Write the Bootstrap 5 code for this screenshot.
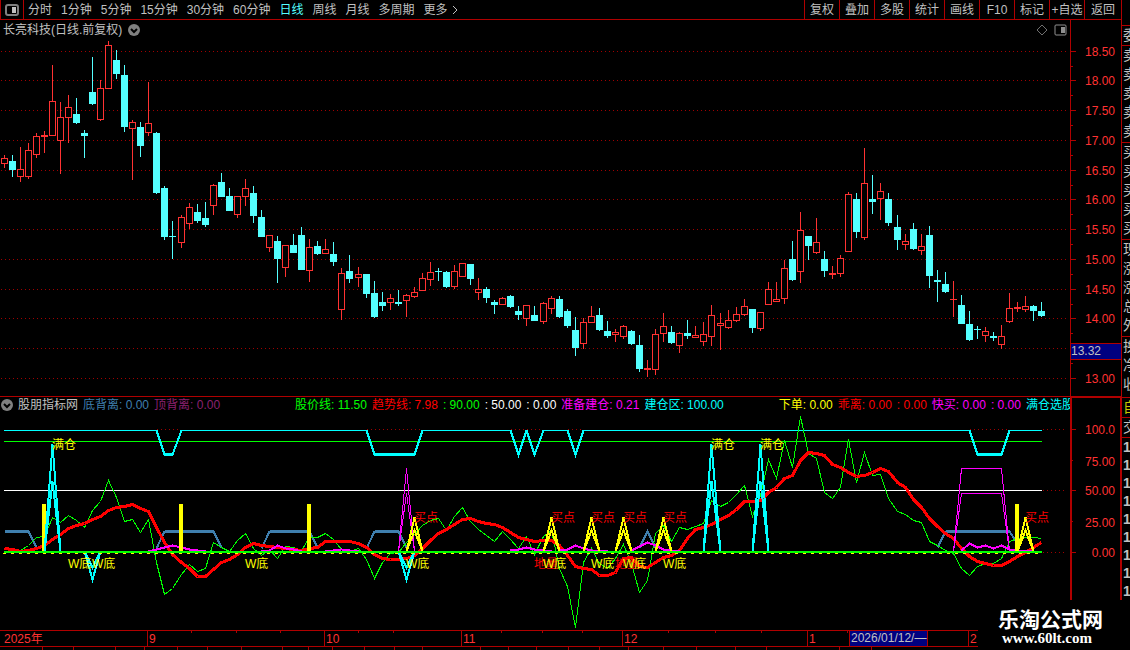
<!DOCTYPE html>
<html lang="zh-CN" data-bs-theme="dark">
<head>
<meta charset="utf-8">
<meta name="viewport" content="width=device-width, initial-scale=1">
<title>长亮科技 日线</title>
<link href="https://cdn.jsdelivr.net/npm/bootstrap@5.3.0/dist/css/bootstrap.min.css" rel="stylesheet">
<style>
  :root { --line: #b00000; --ink: #c0c0c0; --price: #ff3232; }
  body { background: #000; color: var(--ink); font: 12px/16px "Liberation Sans", "Noto Sans CJK SC", sans-serif; min-height: 100vh; }
  svg { display: block; }
  .toolbar { height: 20px; border-right: 1px solid var(--line); border-bottom: 1px solid var(--line); }
  .toolbar button { background: none; border: 0; padding: 0; color: inherit; line-height: 18px; white-space: nowrap; }
  .toolbar .layout-toggle { width: 24px; border-left: 1px solid var(--line); border-right: 1px solid var(--line); }
  .periods { gap: 9px; padding-left: 4px; }
  .periods .current { color: #54ffff; }
  .toolbar .tool { width: 35px; border-left: 1px solid var(--line); }
  .toolbar .tool:last-child { width: 37px; }
  .pane-price { flex: 376 1 0; }
  .pane-indicator { flex: 234 1 0; }
  .plot { min-width: 0; min-height: 0; }
  .pane-indicator .plot { border-top: 1px solid var(--line); }
  .plot-title { height: 20px; padding: 0 3px; gap: 6px; }
  .legend-row { height: 16px; margin-bottom: 1px; gap: 5px; padding-left: 1px; white-space: nowrap; overflow: hidden; }
  .canvas { min-height: 0; overflow: hidden; }
  .canvas svg { width: 100%; height: 100%; }
  .scale { width: 52px; flex: none; }
  .pane-price .scale { border-left: 1px solid var(--line); border-right: 1px solid var(--line); }
  .pane-indicator .scale { border: 2px solid var(--line); border-bottom: 0; }
  .dates { height: 20px; }
  .group-wide { margin-left: 70px; }
  .group-mid { margin-left: 50px; }
  .quotes { width: 8px; flex: none; overflow: hidden; font-size: 14px; }
  .quotes .block { border-bottom: 1px solid var(--line); padding-left: 1px; }
  .quotes .block-head { height: 26px; }
  .quotes .cell { height: 19px; line-height: 19px; width: 20px; }
  .quotes .block-5 { height: 97px; }
  .quotes .block-3 { height: 61px; }
  .quotes .cell-tick { height: 18px; line-height: 18px; font-weight: bold; padding-left: 1px; }
  .site-mark { width: 152px; height: 50px; background: #000; color: #fff; }
  .site-mark .site-name { font: bold 21px/20px "Noto Sans CJK SC", sans-serif; }
  .site-mark .site-url { font: bold 15px/20px "Liberation Serif", serif; }
  .c-steel { color: #3f7fae; } .c-plum { color: #8b2070; } .c-lime { color: #0f0; } .c-red { color: #f00; }
  .c-mag { color: #f0f; } .c-cyan { color: #0ff; } .c-yel { color: #ff0; }
  .c-gold { color: #c8c800; }
</style>
</head>
<body class="d-flex position-relative overflow-hidden vh-100 m-0">
<main class="d-flex flex-column flex-grow-1 plot">
  <nav class="toolbar d-flex flex-shrink-0">
    <button class="layout-toggle d-flex align-items-center justify-content-center" aria-label="布局">
      <svg width="14" height="12" viewBox="0 0 14 12"><rect x="1" y="1" width="12" height="10" rx="2" fill="none" stroke="#808080" stroke-width="2"/><rect x="7" y="3" width="4" height="6" fill="#c0c0c0"/></svg>
    </button>
    <div class="periods d-flex me-auto">
      <button>分时</button><button>1分钟</button><button>5分钟</button><button>15分钟</button><button>30分钟</button><button>60分钟</button><button class="current">日线</button><button>周线</button><button>月线</button><button>多周期</button>
      <button class="d-flex align-items-center gap-1">更多 <svg width="6" height="10" viewBox="0 0 6 10"><path d="M1 1l4 4-4 4" fill="none" stroke="#c0c0c0"/></svg></button>
    </div>
    <button class="tool">复权</button><button class="tool">叠加</button><button class="tool">多股</button><button class="tool">统计</button><button class="tool">画线</button><button class="tool">F10</button><button class="tool">标记</button><button class="tool">+自选</button><button class="tool">返回</button>
  </nav>

  <section class="pane-price d-flex plot">
    <div class="plot d-flex flex-column flex-grow-1">
      <div class="plot-title d-flex align-items-center">
        <span>长亮科技(日线.前复权)</span>
        <svg width="12" height="12" viewBox="0 0 12 12"><circle cx="6" cy="6" r="6" fill="#808080"/><path d="M3 5l3 3 3-3" fill="none" stroke="#000" stroke-width="2"/></svg>
        <svg class="ms-auto" width="12" height="12" viewBox="0 0 12 12"><path d="M6 1l5 5-5 5-5-5z" fill="none" stroke="#707070"/></svg>
        <svg width="13" height="12" viewBox="0 0 13 12"><rect x="1" y="1" width="11" height="10" rx="1" fill="none" stroke="#909090"/><rect x="7" y="3" width="4" height="6" fill="#909090"/></svg>
      </div>
      <div class="canvas flex-grow-1"><svg id="candles" role="img" aria-label="日线K线图"></svg></div>
    </div>
    <div class="scale canvas"><svg id="price-scale"></svg></div>
  </section>

  <section class="pane-indicator d-flex plot">
    <div class="plot d-flex flex-column flex-grow-1">
      <div class="legend-row d-flex align-items-center">
        <svg class="flex-shrink-0" width="12" height="12" viewBox="0 0 12 12"><circle cx="6" cy="6" r="6" fill="#808080"/><path d="M3 5l3 3 3-3" fill="none" stroke="#000" stroke-width="2"/></svg>
        <span>股朋指标网</span>
        <span class="c-steel">底背离: 0.00</span><span class="c-plum">顶背离: 0.00</span>
        <span class="c-lime group-wide">股价线: 11.50</span><span class="c-red">趋势线: 7.98</span><span class="c-lime">: 90.00</span><span class="text-white">: 50.00</span><span class="text-white">: 0.00</span><span class="c-mag">准备建仓: 0.21</span><span class="c-cyan">建仓区: 100.00</span>
        <span class="c-yel group-mid">下单: 0.00</span><span class="c-red">乖离: 0.00</span><span class="c-red">: 0.00</span><span class="c-mag">快买: 0.00</span><span class="c-mag">: 0.00</span><span class="c-cyan">满仓选股</span>
      </div>
      <div class="canvas flex-grow-1"><svg id="indicator" role="img" aria-label="股朋指标"></svg></div>
    </div>
    <div class="scale canvas"><svg id="indicator-scale"></svg></div>
  </section>

  <footer class="dates canvas flex-shrink-0"><svg id="dates"></svg></footer>
</main>

<aside class="quotes">
  <div class="block block-head"></div>
  <div class="block"><div class="cell">委</div></div>
  <div class="block block-5"><div class="cell">卖</div><div class="cell">卖</div><div class="cell">卖</div><div class="cell">卖</div><div class="cell">卖</div></div>
  <div class="block block-5"><div class="cell">买</div><div class="cell">买</div><div class="cell">买</div><div class="cell">买</div><div class="cell">买</div></div>
  <div class="block block-5"><div class="cell">现</div><div class="cell">涨</div><div class="cell">涨</div><div class="cell">总</div><div class="cell">外</div></div>
  <div class="block block-3"><div class="cell">换</div><div class="cell">净</div><div class="cell">收</div></div>
  <div class="block c-gold"><div class="cell">自</div></div>
  <div class="block"><div class="cell">交</div></div>
  <div class="cell-tick">1</div><div class="cell-tick">1</div><div class="cell-tick">1</div><div class="cell-tick">1</div><div class="cell-tick">1</div><div class="cell-tick">1</div><div class="cell-tick">1</div><div class="cell-tick">1</div><div class="cell-tick">1</div>
</aside>

<div class="site-mark position-absolute bottom-0 end-0 px-3">
  <div class="site-name px-1 pt-2 text-nowrap">乐淘公式网</div>
  <div class="site-url px-2 text-nowrap">www.60lt.com</div>
</div>

<script src="https://cdn.jsdelivr.net/npm/bootstrap@5.3.0/dist/js/bootstrap.bundle.min.js"></script>
<script>
// One candle per entry: high, body top, body bottom, low; "c" = falling day
const CANDLES = `155 158 164 168 r|155 161 170 177 c|147 169 177 182 r|143 150 177 179 r|133 136 155 158 r|131 135 137 153 r|65 101 136 136 r|102 117 141 174 r|95 107 118 143 r|98 114 123 124 c|130 133 136 158 c|57 92 104 105 c|80 88 120 121 r|41 45 89 89 r|50 60 74 79 c|65 75 127 132 c|120 122 129 180 r|122 127 146 157 c|82 123 133 136 r|132 133 193 194 c|186 188 237 240 c|221 236 237 259 c|215 217 243 248 r|203 207 224 229 r|204 212 221 223 c|202 218 225 227 c|184 185 206 215 r|173 182 197 197 c|188 196 211 211 c|196 196 215 218 r|179 188 197 206 r|186 193 216 223 c|210 217 237 237 c|235 235 248 252 r|236 241 259 283 c|245 245 268 277 r|234 245 253 253 c|227 235 270 270 c|239 247 271 282 r|241 246 254 255 c|239 249 254 254 r|242 254 262 266 c|268 273 310 320 r|255 271 279 283 c|267 274 278 287 r|274 274 294 298 c|281 293 317 318 c|292 302 306 311 c|294 298 303 310 r|290 302 304 306 c|294 295 301 317 r|287 292 297 298 r|273 278 291 291 r|262 272 280 286 r|268 271 272 281 c|271 272 287 288 c|265 271 287 289 r|263 263 277 277 r|264 264 279 285 c|278 289 293 300 r|287 289 298 303 c|300 302 305 314 c|297 298 305 305 r|295 296 307 308 c|306 311 315 320 c|305 305 319 326 r|306 315 321 321 c|302 303 322 324 r|296 298 309 314 r|296 299 317 318 c|309 311 326 328 c|317 330 348 356 c|318 322 344 349 r|306 316 323 323 r|308 315 330 331 c|321 331 336 338 c|329 332 335 342 r|325 326 337 339 r|330 331 344 345 c|335 345 369 372 c|360 368 370 377 r|329 334 370 375 r|313 326 334 342 r|326 332 343 344 c|332 333 346 353 r|320 333 336 339 c|326 335 338 338 r|322 334 342 346 r|305 315 337 346 r|313 323 326 350 r|310 320 328 329 r|307 314 321 322 r|299 306 315 316 r|309 309 328 333 c|312 312 329 331 r|282 289 305 305 r|282 299 302 302 r|260 268 299 304 r|241 259 280 281 c|212 230 272 283 r|236 236 246 260 c|218 242 253 254 r|251 259 271 277 c|266 273 275 279 r|255 258 274 277 r|192 194 252 252 r|193 199 232 238 c|148 183 238 240 r|175 199 202 214 c|183 191 199 220 r|193 199 223 226 c|215 227 240 250 c|234 241 245 250 r|223 229 249 250 c|234 246 251 255 r|226 235 276 288 c|270 280 282 302 c|272 284 292 293 c|281 299 300 317 r|295 305 324 324 c|311 324 340 341 c|326 329 330 339 c|327 331 336 342 r|332 336 338 341 c|325 336 345 349 r|293 308 322 323 r|302 307 309 312 r|296 306 310 312 r|305 306 311 321 c|302 311 316 317 c`.split('|').map(s => s.split(' '));

const PRICE_LINE = [551,551,550,545,537,536,517,522,515,520,527,510,501,480,497,521,519,532,519,562,594,588,574,564,571,568,542,547,551,540,533,548,555,549,558,546,547,550,537,537,533,539,549,551,548,559,578,562,553,552,542,534,525,520,518,530,516,507,521,529,535,541,531,539,548,536,554,536,530,568,586,627,562,548,563,568,558,544,563,592,580,533,525,541,527,529,526,523,500,506,502,494,485,516,495,459,478,440,467,416,453,458,492,498,487,439,482,452,475,474,498,511,514,520,522,541,545,550,553,568,575,566,563,563,558,541,538,537,537,538];
const TREND_LINE = [548,549,551,550,548,545,539,534,528,525,523,519,516,510,507,506,504,508,511,527,542,554,562,568,576,576,569,562,559,554,547,543,545,546,547,548,549,550,548,547,541,541,541,541,543,547,554,558,559,559,558,555,548,540,533,529,524,519,518,521,523,524,527,532,537,539,541,540,540,545,555,566,568,569,575,575,572,558,557,566,567,562,557,555,550,538,529,527,524,519,515,509,501,501,500,492,487,478,475,460,452,453,455,464,467,472,476,475,472,468,471,482,487,499,507,518,526,533,538,548,556,561,563,565,565,561,556,552,547,542];

const N = n => 4.03 + 8.0449 * n;           // bar number -> design x
let out, sx, sy, top0;
const X = x => Math.floor(x * sx), Y = y => Math.round((y - top0) * sy);
const begin = (id, w, h, t) => {
  const el = document.getElementById(id), b = el.getBoundingClientRect();
  out = []; sx = b.width / w; sy = b.height / h; top0 = t;
  return el;
};
const rect = (x, y, w, h, fill, extra = '') => out.push(`<rect x="${x}" y="${y}" width="${w}" height="${h}" fill="${fill}" ${extra}/>`);
const hline = (x1, x2, y, color, dash = '') => out.push(`<path d="M${x1} ${Y(y) + .5}H${x2}" stroke="${color}" ${dash && `stroke-dasharray="${dash}"`}/>`);
const text = (x, y, s, color, anchor = 'start') => out.push(`<text x="${x}" y="${y}" fill="${color}" font-size="12" text-anchor="${anchor}">${s}</text>`);
const poly = (pts, color, width) => out.push(`<polyline points="${pts.map(([n, y]) => `${X(N(n)) + .5},${Y(y) + .5}`).join(' ')}" fill="none" stroke="${color}" stroke-width="${width}" shape-rendering="crispEdges"/>`);

const PRICES = [51,80,110,140,170,199,229,259,289,318,348,378];

function drawCandles() {
  const el = begin('candles', 1070, 356, 40), w = X(1067);
  PRICES.forEach(y => hline(1, w, y, '#a00000', '1 3'));
  CANDLES.forEach(([h, t, b, l, kind], n) => {
    const x = X(N(n)), c = kind === 'c' ? '#54ffff' : '#ff3232', bh = Y(b) - Y(t);
    rect(x, Y(h), 1, Y(t) - Y(h), c);
    rect(x, Y(b), 1, Y(l) - Y(b), c);
    if (kind === 'c' || bh < 3) rect(x - 3, Y(t), 7, Math.max(bh, 1), c);
    else rect(x - 2.5, Y(t) + .5, 6, bh - 1, '#000', `stroke="${c}"`);
  });
  el.innerHTML = out.join('');
}

function drawPriceScale() {
  const el = begin('price-scale', 50, 376, 20);
  PRICES.forEach((y, i) => {
    hline(0, 5, y, '#b00000');
    if (i < 11) hline(0, 2, y + 15, '#b00000');
    if (i !== 10) text(44, Y(y) + 5, (18.5 - i * .5).toFixed(2), '#ff3232', 'end');
  });
  rect(0, Y(343), 50, 17, '#000080');
  hline(0, 50, 343, '#b00000'); hline(0, 50, 359, '#b00000');
  text(0, Y(351) + 4, '13.32', '#c0c0c0');
  el.innerHTML = out.join('');
}

function drawIndicator() {
  const el = begin('indicator', 1070, 216, 414);
  const right = X(N(129)) + 1, edge = X(1067);
  const spike = (n, outer, inner, color, w) => { poly([[n-1,551],[n,outer],[n+1,551]], color, w); poly([[n-1,551],[n,inner],[n+1,551]], color, w); };
  hline(4, right, 441, '#0f0'); hline(4, right, 490, '#fff');
  [429, 490, 552].forEach(y => hline(X(1043), edge, y, '#a00000', '1 3'));

  // 建仓区
  const dips = [[19,20,21,22],[45,46,51,52],[63,64,64,65],[65,66,66,67],[70,71,71,72],[120,121,124,125]];
  let from = 4;
  dips.forEach(([a, b, c, d]) => {
    if (X(N(a)) > from) hline(from, X(N(a)), 430, '#0ff');
    hline(X(N(a)) + 1, X(N(d)), 429, '#a00000', '1 3');
    poly([[a,430],[b,454],[c,454],[d,430]], '#0ff', 2);
    if (c > b) poly([[b,454],[c,454]], '#0ff', 3);
    from = X(N(d));
  });
  hline(from, right, 430, '#0ff');

  // 底背离
  [[[0,531],[3,531],[4,547]],[[19,548],[20,531],[26,531],[27,547]],[[32,548],[33,531],[38,531],[39,547]],[[45,548],[46,531],[49,531],[50,547]],[[79,547],[80,531],[81,547]],[[116,547],[117,531],[125,531],[126,543]]]
    .forEach(p => { poly(p, '#3f7fae', 2); poly(p.filter(q => q[1] === 531), '#3f7fae', 3); });

  poly(PRICE_LINE.map((y, n) => [n, y]), '#0f0', 1);
  poly(TREND_LINE.map((y, n) => [n, y]), '#f00', 3);

  // 准备建仓
  [[[18,551],[19,549],[20,547],[21,545],[22,547],[23,549],[25,551]],[[32,551],[33,550],[34,545],[35,548],[36,549],[37,551]],[[40,551],[42,549],[44,551]],[[63,550],[64,549],[65,547],[66,549],[68,551]],[[69,550],[70,549],[71,545],[72,548],[73,550],[75,551]],[[78,550],[79,546],[80,542],[81,545],[82,549],[84,551]],[[119,550],[120,543],[121,547],[122,545],[123,548],[124,545],[125,549],[126,550],[128,550]]]
    .forEach(p => poly(p, '#f0f', 2));
  spike(50, 468, 493, '#f0f', 1);
  poly([[118,551],[119,468],[124,468],[125,551]], '#f0f', 1);
  poly([[118,551],[119,493],[124,493],[125,551]], '#f0f', 1);

  [5, 22, 38, 126].forEach(n => rect(X(N(n)) - 2, Y(504), 4, Y(551) - Y(504), '#ff0'));
  [6, 88, 94].forEach(n => spike(n, 444, 481, '#0ff', 2));
  [11, 50].forEach(n => spike(n, 579, 567, '#0ff', 2));
  [51, 68, 73, 77, 82, 127].forEach(n => spike(n, 517, 530, '#ff0', 2));

  rect(4, Y(551), right - 4, 2, '#0f0');
  hline(3, right + 1, 553, '#ff0', '3 5');

  [66, 76].forEach(n => text(X(N(n)), Y(568), '地量', '#f00'));
  [8, 11, 30, 50, 67, 73, 77, 82].forEach(n => text(X(N(n)), Y(568), 'W底', '#ff0'));
  [6, 88, 94].forEach(n => text(X(N(n)), Y(449), '满仓', '#ff0'));
  [51, 68, 73, 77, 82, 127].forEach(n => text(X(N(n)), Y(522), '买点', '#f00'));
  el.innerHTML = out.join('');
}

function drawIndicatorScale() {
  const el = begin('indicator-scale', 48, 232, 398);
  [[429,'100.0'],[460,'75.00'],[490,'50.00'],[521,'25.00'],[552,'0.00']].forEach(([y, s], i) => {
    hline(0, i % 2 ? 1 : 4, y, '#b00000');
    text(43, Y(y) + (i % 2 ? 6 : 5), s, '#ff3232', 'end');
  });
  el.innerHTML = out.join('');
}

function drawDates() {
  const el = begin('dates', 1122, 20, 630), w = X(1122), red = '#b00000';
  const v = (x, y, h) => rect(X(x), y, 1, h, red);
  hline(0, w, 630, red); hline(0, w, 646, red);
  [147,324,461,622,807,968].forEach(x => v(x, 0, 16));
  [191,236,280,358,393,501,542,582,668,715,761,847].forEach(x => v(x, 0, 3));
  [42,73,115,144,177,207,241,282,308,332,364,394,422,480,508,536,568,599,628,663,696,735,766,839,871].forEach(x => v(x, 16, 4));
  [[4,'2025年'],[149,'9'],[326,'10'],[463,'11'],[624,'12'],[809,'1'],[970,'2']].forEach(([x, s]) => text(X(x), 13, s, '#ff3232'));
  rect(X(849) + .5, .5, 78, 16, '#000080', `stroke="${red}"`);
  text(X(851), 12, '2026/01/12/—', '#c0c0c0');
  el.innerHTML = out.join('');
}

function drawAll() { drawCandles(); drawPriceScale(); drawIndicator(); drawIndicatorScale(); drawDates(); }
drawAll();
addEventListener('resize', drawAll);
</script>
</body>
</html>
